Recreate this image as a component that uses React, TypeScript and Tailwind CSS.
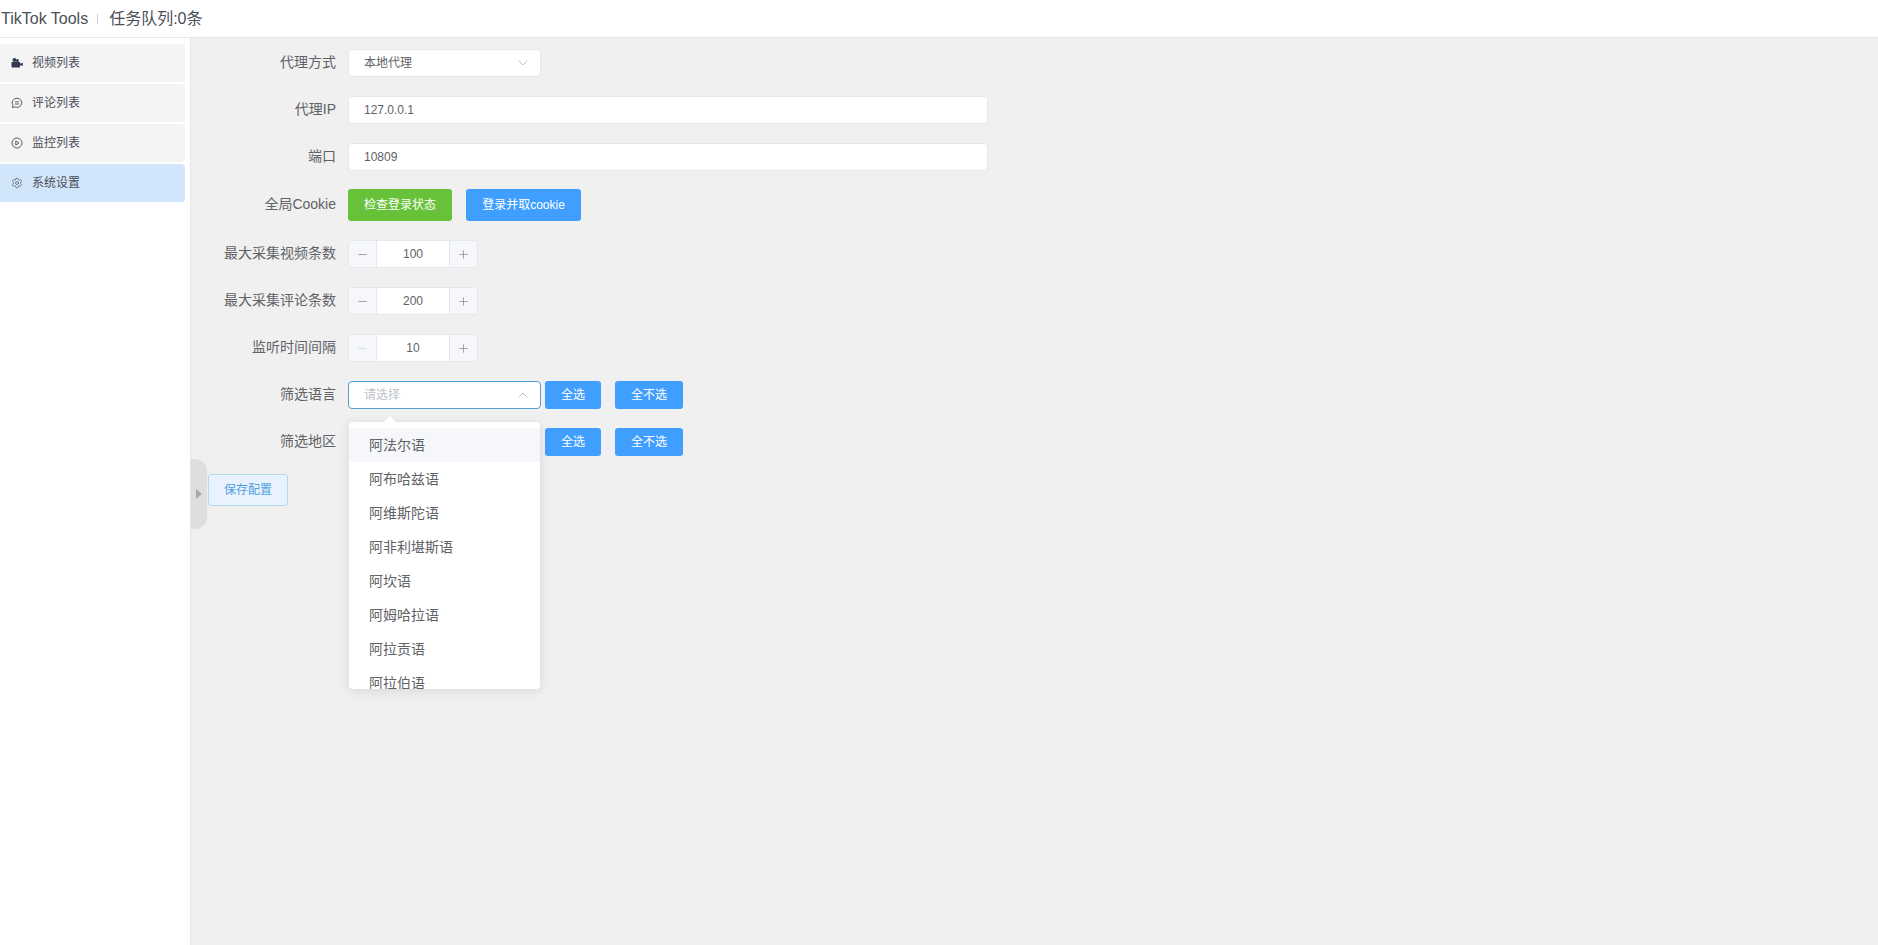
import { ChevronDown, ChevronUp, Minus, Plus, Settings } from "lucide-react";
import React from "react";

const FONT = "font-['Liberation_Sans','Noto_Sans_CJK_SC',sans-serif]";

const LANGUAGES = ["阿法尔语", "阿布哈兹语", "阿维斯陀语", "阿非利堪斯语", "阿坎语", "阿姆哈拉语", "阿拉贡语", "阿拉伯语"];

function CameraIcon() {
  return (
    <svg width="12" height="12" viewBox="0 0 12 12" className="text-[#303b4d]">
      <circle cx="3.4" cy="3" r="1.9" fill="currentColor" />
      <circle cx="6.4" cy="3.4" r="1.5" fill="currentColor" />
      <rect x="0.5" y="5" width="8.6" height="5.4" rx="0.6" fill="currentColor" />
      <path d="M9 6.8l2.8-1.1v3.3L9 8z" fill="currentColor" />
    </svg>
  );
}

function CommentIcon() {
  return (
    <svg width="12" height="12" viewBox="0 0 12 12" fill="none" stroke="#4a4f57" strokeWidth="0.9">
      <path d="M6 1.2a4.8 4.6 0 1 1-2.4 8.6L1.4 10.6l.6-2.2A4.8 4.6 0 0 1 6 1.2z" />
      <path d="M4 4.9h4M4 7h4" />
    </svg>
  );
}

function PlayIcon() {
  return (
    <svg width="12" height="12" viewBox="0 0 12 12" fill="none" stroke="#4a4f57" strokeWidth="0.9">
      <circle cx="6" cy="6" r="5" />
      <path d="M4.8 3.9L8 6 4.8 8.1z" />
    </svg>
  );
}

const NAV = [
  { label: "视频列表", icon: <CameraIcon /> },
  { label: "评论列表", icon: <CommentIcon /> },
  { label: "监控列表", icon: <PlayIcon /> },
  { label: "系统设置", icon: <Settings size={12} strokeWidth={1.3} className="text-[#4a4f57]" />, active: true },
];

function Row({ label, children, className = "h-[28px] mb-[19px]" }: { label: string; children: React.ReactNode; className?: string }) {
  return (
    <div className={`flex items-center ${className}`}>
      <label className="w-[145px] shrink-0 text-right text-[14px] text-[#606266] leading-none -mt-[2px]">{label}</label>
      <div className="ml-[12px] flex items-center">{children}</div>
    </div>
  );
}

function SelectBox({ value, placeholder, open }: { value?: string; placeholder?: string; open?: boolean }) {
  return (
    <div className={`w-[193px] h-[28px] bg-white rounded-[4px] border flex items-center justify-between pl-[15px] pr-[9px] text-[12px] ${open ? "border-[#4f9fd6]" : "border-[#e4e7ed]"}`}>
      <span className={value ? "text-[#606266]" : "text-[#c0c4cc]"}>{value ?? placeholder}</span>
      {open ? <ChevronUp size={16} strokeWidth={1} className="text-[#9a9ea6]" /> : <ChevronDown size={16} strokeWidth={1} className="text-[#9a9ea6]" />}
    </div>
  );
}

function TextInput({ value }: { value: string }) {
  return (
    <div className="w-[640px] h-[28px] bg-white rounded-[4px] border border-[#e4e7ed] flex items-center px-[15px] text-[12px] text-[#606266]">
      {value}
    </div>
  );
}

function NumberInput({ value, minDisabled }: { value: string; minDisabled?: boolean }) {
  return (
    <div className="w-[130px] h-[28px] bg-white rounded-[4px] border border-[#e4e7ed] flex items-center text-[12px] text-[#606266] overflow-hidden">
      <span className={`w-[28px] h-full bg-[#f5f7fa] border-r border-[#e4e7ed] flex items-center justify-center ${minDisabled ? "text-[#c0c4cc]" : "text-[#606266]"}`}>
        <Minus size={13} strokeWidth={1} />
      </span>
      <span className="flex-1 text-center">{value}</span>
      <span className="w-[28px] h-full bg-[#f5f7fa] border-l border-[#e4e7ed] flex items-center justify-center">
        <Plus size={13} strokeWidth={1} />
      </span>
    </div>
  );
}

function SmallButton({ children, className }: { children: React.ReactNode; className: string }) {
  return (
    <button className={`h-[28px] rounded-[3px] bg-[#409eff] text-white text-[12px] ${className}`}>{children}</button>
  );
}

export default function App() {
  return (
    <div className={`w-full h-[945px] flex flex-col bg-white overflow-hidden ${FONT}`}>
      {/* Header */}
      <header className="h-[38px] shrink-0 border-b border-[#e6e6e6] flex items-center pl-[1px] text-[16px] text-[#4a4f57]">
        <span>TikTok Tools</span>
        <span className="w-px h-[10px] bg-[#cfcfcf] ml-[9px] mr-[11px]" />
        <span>任务队列:0条</span>
      </header>

      <div className="flex-1 flex min-h-0">
        {/* Sidebar */}
        <aside className="w-[191px] shrink-0 border-r border-[#e6e6e6] pt-[6px] pr-[5px] flex flex-col gap-[2px]">
          {NAV.map((item) => (
            <div
              key={item.label}
              className={`h-[38px] rounded-r-[4px] flex items-center pl-[11px] text-[12px] text-[#4a4f57] ${item.active ? "bg-[#d1e5fb]" : "bg-[#f4f4f4]"}`}
            >
              <span className="w-[21px] flex">{item.icon}</span>
              {item.label}
            </div>
          ))}
        </aside>

        {/* Form */}
        <main className="relative flex-1 bg-[#f0f0f0] pt-[11px]">
          <Row label="代理方式">
            <SelectBox value="本地代理" />
          </Row>
          <Row label="代理IP">
            <TextInput value="127.0.0.1" />
          </Row>
          <Row label="端口">
            <TextInput value="10809" />
          </Row>
          <Row label="全局Cookie" className="h-[32px] mb-[19px] -mt-[1px]">
            <button className="w-[104px] h-[32px] rounded-[3px] bg-[#67c23a] text-white text-[12px]">检查登录状态</button>
            <button className="w-[115px] h-[32px] ml-[14px] rounded-[3px] bg-[#409eff] text-white text-[12px]">登录并取cookie</button>
          </Row>
          <Row label="最大采集视频条数">
            <NumberInput value="100" />
          </Row>
          <Row label="最大采集评论条数">
            <NumberInput value="200" />
          </Row>
          <Row label="监听时间间隔">
            <NumberInput value="10" minDisabled />
          </Row>
          <Row label="筛选语言">
            <SelectBox placeholder="请选择" open />
            <SmallButton className="w-[56px] ml-[4px]">全选</SmallButton>
            <SmallButton className="w-[68px] ml-[14px]">全不选</SmallButton>
          </Row>
          <Row label="筛选地区" className="h-[28px] mb-[18px]">
            <div className="w-[193px]" />
            <SmallButton className="w-[56px] ml-[4px]">全选</SmallButton>
            <SmallButton className="w-[68px] ml-[14px]">全不选</SmallButton>
          </Row>
          <button className="ml-[17px] w-[80px] h-[32px] rounded-[3px] bg-[#e8f3fd] border border-[#b3d8f0] text-[#4f9fe0] text-[12px]">保存配置</button>

          {/* Collapse handle */}
          <div className="absolute left-0 top-[421px] w-[16px] h-[70px] bg-[#dedede] rounded-r-[12px] flex items-center pl-[5px]">
            <span className="w-0 h-0 border-y-[5px] border-y-transparent border-l-[6px] border-l-[#a9a9a9]" />
          </div>

          {/* Select dropdown */}
          <div className="absolute left-[158px] top-[384px] w-[191px] h-[267px] bg-white rounded-[4px] shadow-[0_2px_12px_0_rgba(0,0,0,0.1)]">
            <div className="absolute -top-[4px] left-[36px] w-[10px] h-[10px] bg-white rotate-45" />
            <div className="relative h-full overflow-hidden py-[6px]">
              {LANGUAGES.map((lang, i) => (
                <div key={lang} className={`h-[34px] leading-[34px] px-[20px] text-[14px] text-[#606266] ${i === 0 ? "bg-[#f5f7fa]" : ""}`}>
                  {lang}
                </div>
              ))}
            </div>
          </div>
        </main>
      </div>
    </div>
  );
}
